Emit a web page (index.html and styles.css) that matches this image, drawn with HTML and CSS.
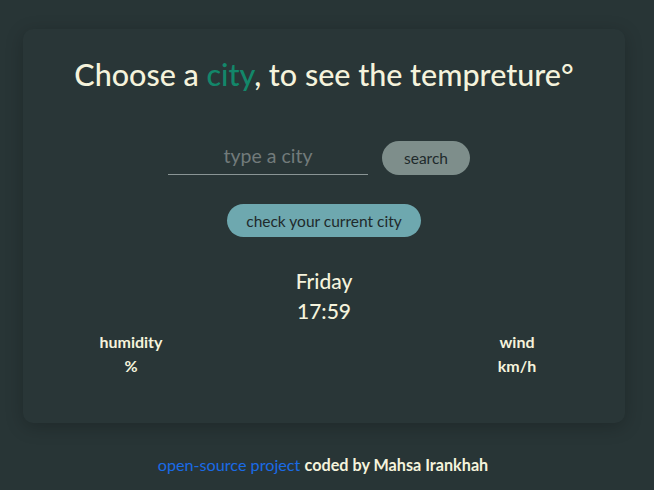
FILE: index.html
```html
<!DOCTYPE html>
<html lang="en">
<head>
<meta charset="utf-8">
<title>Weather</title>
<link rel="stylesheet" href="styles.css">
</head>
<body>
<main class="card">
  <h1 class="title">Choose a <span class="accent">city</span>, to see the tempreture°</h1>
  <form class="search-row">
    <input class="city-input" type="text" placeholder="type a city">
    <button class="btn btn-search" type="button">search</button>
  </form>
  <div class="current-row">
    <button class="btn btn-current" type="button">check your current city</button>
  </div>
  <div class="when">
    <div class="day">Friday</div>
    <div class="time">17:59</div>
  </div>
  <div class="stats">
    <div class="stat">
      <div class="stat-label">humidity</div>
      <div class="stat-value">%</div>
    </div>
    <div class="stat">
      <div class="stat-label">wind</div>
      <div class="stat-value">km/h</div>
    </div>
  </div>
</main>
<footer class="footer">
  <a class="footer-link" href="#">open-source project</a> <span class="footer-by">coded by Mahsa Irankhah</span>
</footer>
</body>
</html>
```
FILE: styles.css
```css
* { box-sizing: border-box; }
html, body { height: 100%; }
body {
  margin: 0;
  background: #283536;
  font-family: "Lato", "Open Sans", sans-serif;
  color: #f5f3dc;
  overflow: hidden;
}
.card {
  width: 602px;
  margin: 29px 0 0 23px;
  background: #293637;
  border-radius: 10px;
  box-shadow: 0 4px 18px rgba(0, 0, 0, 0.22);
  padding: 26px 0 45px;
}
.title {
  margin: 0;
  text-align: center;
  font-size: 30.5px;
  line-height: 38px;
  font-weight: 500;
}
.accent { color: #13876a; }
.search-row {
  margin: 48px 0 0;
  display: flex;
  justify-content: center;
  align-items: center;
  gap: 14px;
  padding-right: 10px;
}
.city-input {
  width: 200px;
  height: 34px;
  background: transparent;
  border: none;
  border-bottom: 1px solid #8a9595;
  text-align: center;
  font-family: inherit;
  font-size: 19.5px;
  color: #f5f3dc;
  outline: none;
  padding: 0 0 4px;
}
.city-input::placeholder { color: #727b7b; }
.btn {
  border: none;
  font-family: inherit;
  font-size: 15.5px;
  color: #1f2a2b;
  border-radius: 17px;
  cursor: pointer;
}
.btn-search {
  width: 88px;
  height: 34px;
  background: #7e8e8b;
}
.current-row {
  display: flex;
  justify-content: center;
  margin-top: 29px;
}
.btn-current {
  width: 194px;
  height: 33px;
  background: #6ea8af;
}
.when {
  margin-top: 29px;
  text-align: center;
  font-size: 21px;
  line-height: 30px;
  font-weight: 500;
}
.stats {
  display: flex;
  justify-content: space-between;
  padding: 0 58px;
  margin-top: 4px;
}
.stat {
  width: 100px;
  text-align: center;
  font-size: 16px;
  font-weight: 700;
  line-height: 24px;
}
.footer {
  text-align: center;
  margin-top: 32px;
  font-size: 16.2px;
  padding-right: 8px;
}
.footer-link {
  color: #1a6be6;
  text-decoration: none;
}
.footer-by { font-weight: 700; }
```
